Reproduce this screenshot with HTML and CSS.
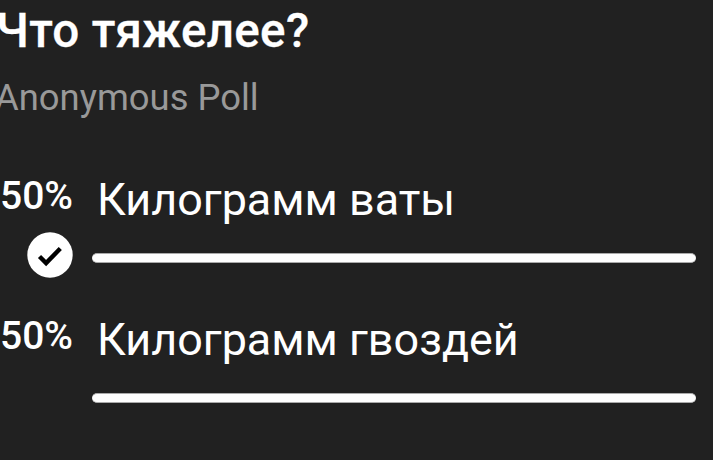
FILE: index.html
```html
<!DOCTYPE html>
<html lang="ru">
<head>
<meta charset="utf-8">
<title>Что тяжелее?</title>
<link rel="stylesheet" href="styles.css">
</head>
<body>
<main class="poll">
  <h1 class="question">Что тяжелее?</h1>
  <p class="kind">Anonymous Poll</p>
  <section class="option">
    <div class="percent">50%</div>
    <div class="answer">Килограмм ваты</div>
    <svg class="check" viewBox="0 0 46 46"><circle cx="23" cy="23" r="22.700" fill="#fff"/><path d="M12.500 24.500l6.600 6.600L33.300 16.500" fill="none" stroke="#000" stroke-width="4.400"/></svg>
    <div class="bar"></div>
  </section>
  <section class="option">
    <div class="percent">50%</div>
    <div class="answer">Килограмм гвоздей</div>
    <div class="bar"></div>
  </section>
</main>
</body>
</html>
```
FILE: styles.css
```css
body {
  margin: 0;
  background: #212121;
  color: #fff;
  font-family: Roboto, sans-serif;
}
.poll {
  height: 460px;
  overflow: hidden;
}
.question {
  margin: 0 0 0 -4px;
  padding-top: 4px;
  font-size: 47.6px;
  line-height: 54px;
  font-weight: 500;
  letter-spacing: 0.3px;
  white-space: nowrap;
  -webkit-text-stroke: 0.3px #fff;
}
.kind {
  margin: 18px 0 53px -5px;
  font-size: 36.4px;
  line-height: 44px;
  color: #999;
}
.option {
  display: grid;
  grid-template-columns: 73px 604px;
  grid-template-rows: 54px 60px;
  column-gap: 19px;
  height: 140px;
}
.percent {
  font-size: 39px;
  line-height: 46px;
  font-weight: 500;
}
.answer {
  margin-left: 5px;
  font-size: 44.9px;
  line-height: 54px;
  white-space: nowrap;
}
.check {
  width: 46px;
  height: 46px;
  margin: 5px 0 0 27px;
}
.bar {
  box-sizing: border-box;
  grid-column: 2;
  height: 10px;
  margin-top: 26px;
  border: solid #aaa;
  border-width: 1px 0;
  border-radius: 5px;
  background: #fff;
}
```
